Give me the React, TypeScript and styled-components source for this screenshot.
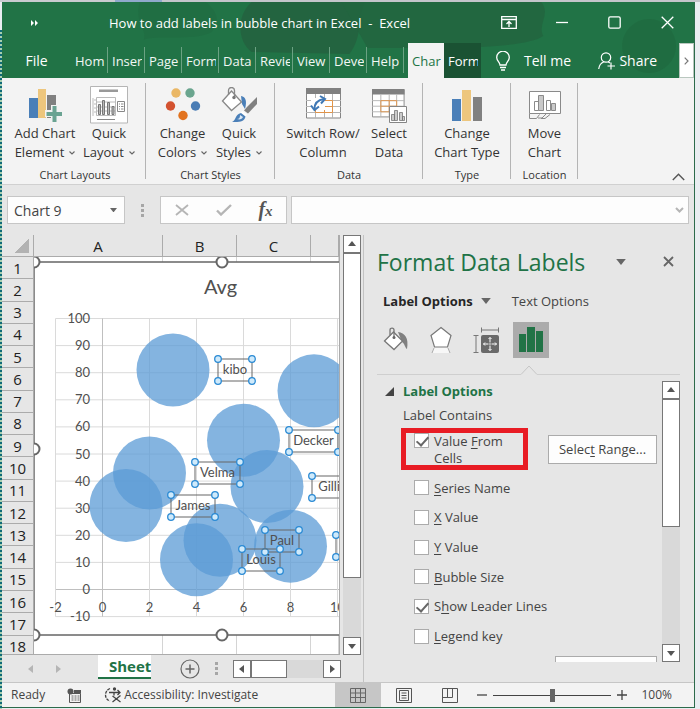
import React from "react";
import styled, { createGlobalStyle, css } from "styled-components";

const GlobalStyle = createGlobalStyle`
  * { box-sizing: border-box; }
  html, body { margin: 0; padding: 0; }
  body { font-family: "Open Sans", "Noto Sans", sans-serif; font-size: 13px; color: #444; overflow: hidden; }
  button, input { font: inherit; color: inherit; margin: 0; padding: 0; border: 0; background: none; border-radius: 0; }
  svg { display: block; flex: none; }
`;

const Desktop = styled.div`
  height: 100vh;
  min-height: 600px;
  display: flex;
  padding: 2px 5px 1px 2px;
  background:
    repeating-linear-gradient(180deg, #0f6a78 0 2px, #a9cfb0 2px 4px) left 0 top 30px / 2px 100% no-repeat,
    linear-gradient(90deg, #c9cbd0 0 115px, #8fa9cc 115px 162px, #c4c5cb 162px 100%) left top / 100% 2px no-repeat,
    #e9edf1;
`;

const Window = styled.main`
  flex: 1;
  min-width: 0;
  display: flex;
  flex-direction: column;
  background: #e6e6e6;
  border-right: 1px solid #2c6b4b;
  border-bottom: 1px solid #2c6b4b;
`;

/* ---------- header ---------- */

const Header = styled.header`
  position: relative;
  flex: none;
  background: #217346;
  color: #fff;
`;

const HeaderArt = styled.svg`
  position: absolute;
  inset: 0;
  width: 100%;
  height: 100%;
`;

const TitleBar = styled.div`
  position: relative;
  display: flex;
  align-items: center;
  height: 41px;
  padding-left: 28px;
`;

const DocTitle = styled.h1`
  flex: 1;
  margin: 0 0 0 69px;
  font-size: 13px;
  font-weight: 400;
  line-height: 20px;
  white-space: pre;
`;

const WindowButtons = styled.div`
  display: flex;
`;

const WindowButton = styled.button`
  width: 53px;
  height: 38px;
  display: grid;
  place-items: center;
`;

const TabBar = styled.nav`
  position: relative;
  display: flex;
  align-items: stretch;
  height: 35px;
  font-size: 14px;
`;

const FileTab = styled.button`
  width: 69px;
`;

const tabKinds = {
  plain: css`
    color: #f2f7f4;
    &::after { content: ""; position: absolute; right: 0; top: 4px; bottom: 5px; width: 1px; background: #6ba283; }
  `,
  active: css`background: #f3f3f3; color: #217346; margin-left: 4px; width: 36px;`,
  dark: css`background: #1a5233; color: #fff;`,
};

const Tab = styled.button<{ $kind: keyof typeof tabKinds }>`
  position: relative;
  width: 37px;
  padding: 0 3px 0 4px;
  font-size: 13px;
  ${(p) => tabKinds[p.$kind]}
  > span { display: block; overflow: hidden; white-space: nowrap; text-align: left; }
`;

const TabAction = styled.button<{ $push?: boolean }>`
  display: flex;
  align-items: center;
  gap: ${(p) => (p.$push ? 3 : 14)}px;
  margin-left: ${(p) => (p.$push ? "auto" : "15px")};
  margin-right: ${(p) => (p.$push ? 22 : 0)}px;
`;

const TabScroll = styled.button`
  width: 15px;
  display: grid;
  place-items: center;
  background: #fff;
  border: 1px solid #b9c7bf;
`;

/* ---------- ribbon ---------- */

const Ribbon = styled.section`
  flex: none;
  display: flex;
  align-items: stretch;
  height: 107px;
  padding-left: 2px;
  background: #f3f3f3;
  border-bottom: 1px solid #d0d0d0;
`;

const Group = styled.div<{ $width: number }>`
  position: relative;
  flex: none;
  width: ${(p) => p.$width}px;
  padding-top: 8px;
  display: flex;
  flex-direction: column;
  &::after { content: ""; position: absolute; right: 0; top: 5px; bottom: 5px; width: 1px; background: #b4b4b4; }
`;

const GroupTools = styled.div`
  display: flex;
  justify-content: center;
  height: 80px;
`;

const Tool = styled.button<{ $width: number }>`
  flex: none;
  width: ${(p) => p.$width}px;
  display: flex;
  flex-direction: column;
  align-items: center;
  justify-content: flex-start;
  font-size: 13px;
  line-height: 19px;
  color: #333;
  white-space: nowrap;
`;

const ToolIcon = styled.span`
  display: grid;
  place-items: center;
  height: 38px;
`;

const ToolLine = styled.span`
  display: flex;
  align-items: center;
  justify-content: center;
  gap: 5px;
`;

const GroupLabel = styled.div`
  text-align: center;
  font-size: 11px;
  line-height: 18px;
  color: #333;
`;

const Collapse = styled.button`
  align-self: flex-end;
  margin: 0 9px 3px auto;
`;

/* ---------- formula bar ---------- */

const FormulaBar = styled.section`
  flex: none;
  display: flex;
  align-items: center;
  height: 50px;
  padding: 0 5px;
`;

const Field = styled.div<{ $width?: number }>`
  display: flex;
  align-items: center;
  height: 28px;
  ${(p) => (p.$width ? `flex: none; width: ${p.$width}px;` : "flex: 1; margin-left: 4px;")}
  background: #fdfdfd;
  border: 1px solid #c6c6c6;
`;

const FieldInput = styled.input`
  flex: 1;
  min-width: 0;
  height: 100%;
  padding: 0 6px;
  outline: none;
  font-size: 14px;
`;

const FieldButton = styled.button<{ $width: number }>`
  width: ${(p) => p.$width}px;
  height: 100%;
  display: grid;
  place-items: center;
`;

const FxMark = styled.span`
  font-family: "Liberation Serif", serif;
  font-style: italic;
  font-weight: 700;
  font-size: 20px;
  line-height: 20px;
  color: #555;
  small { font-size: 15px; }
`;

const Grip = styled.span<{ $gap: number }>`
  flex: none;
  width: 3px;
  height: 13px;
  margin: 0 ${(p) => p.$gap}px;
  background: repeating-linear-gradient(180deg, #a6a6a6 0 3px, transparent 3px 5px);
`;

/* ---------- body ---------- */

const Body = styled.div`
  flex: 1;
  min-height: 0;
  display: flex;
`;

const SheetArea = styled.section`
  flex: 1;
  min-width: 0;
  display: flex;
  flex-direction: column;
`;

const SheetRow = styled.div`
  flex: 1;
  min-height: 0;
  display: flex;
  gap: 3px;
  padding-right: 2px;
`;

const SheetView = styled.div`
  position: relative;
  flex: 1;
  min-width: 0;
  overflow: hidden;
  border-bottom: 1px solid #ababab;
  border-right: 1px solid #ababab;
`;

const Grid = styled.table`
  width: 100%;
  height: 423px;
  table-layout: fixed;
  border-collapse: separate;
  border-spacing: 0;
  background: #fff;
  color: #222;
  font-size: 15px;
  line-height: 20px;
  th, td { padding: 0; font-weight: 400; text-align: center; border-right: 1px solid #d4d4d4; }
  th { background: #e6e6e6; border-bottom: 1px solid #ababab; border-right-color: #ababab; }
  thead th { height: 22px; }
`;

const Col = styled.col<{ $width: number }>`
  width: ${(p) => p.$width}px;
`;

const CornerMark = styled.span`
  display: block;
  width: 15px;
  height: 15px;
  margin: 0 0 0 12px;
  background: linear-gradient(135deg, transparent 50%, #b2b2b2 50%);
`;

const ChartLayer = styled.figure`
  position: absolute;
  left: 32px;
  top: 22px;
  margin: 0;
  font-family: Lato, "Open Sans", sans-serif;
`;

const ScrollTrack = styled.div`
  flex: none;
  width: 18px;
  display: flex;
  flex-direction: column;
  background: #d9d9d9;
`;

const ScrollButton = styled.button`
  flex: none;
  width: 18px;
  height: 18px;
  display: grid;
  place-items: center;
  background: #fff;
  border: 1px solid #777;
`;

const ScrollThumb = styled.div<{ $share: number }>`
  flex: ${(p) => p.$share} 0 0;
  background: #fff;
  border: 1px solid #777;
`;

const ScrollSpace = styled.div<{ $share: number }>`
  flex: ${(p) => p.$share} 0 0;
`;

const SheetTabs = styled.div`
  flex: none;
  display: flex;
  align-items: center;
  height: 27px;
  padding-right: 22px;
`;

const SheetNav = styled.div`
  display: flex;
  flex: none;
  width: 96px;
  padding-left: 24px;
  gap: 17px;
`;

const SheetTab = styled.button`
  flex: none;
  align-self: flex-start;
  width: 53px;
  height: 24px;
  padding-left: 11px;
  overflow: hidden;
  text-align: left;
  white-space: nowrap;
  background: #fff;
  border-bottom: 2px solid #217346;
  color: #217346;
  font-size: 15px;
  font-weight: 700;
  line-height: 20px;
`;

const AddSheet = styled.button`
  flex: none;
  margin: 0 0 0 29px;
`;

const HScroll = styled.div`
  flex: 1;
  display: flex;
  height: 18px;
  background: #d9d9d9;
`;

/* ---------- format pane ---------- */

const Pane = styled.aside`
  flex: none;
  width: 331px;
  display: flex;
  flex-direction: column;
  padding-left: 13px;
  border-left: 1px solid #c3c3c3;
`;

const PaneHead = styled.div`
  display: flex;
  align-items: center;
  height: 53px;
  padding-right: 14px;
`;

const PaneTitle = styled.h2`
  flex: 1;
  margin: 0;
  color: #217346;
  font-size: 23px;
  font-weight: 400;
  line-height: 32px;
  white-space: nowrap;
`;

const PaneHeadButton = styled.button`
  width: 24px;
  height: 24px;
  margin-left: 24px;
  display: grid;
  place-items: center;
`;

const PaneTabs = styled.div`
  display: flex;
  align-items: center;
  height: 26px;
  padding-left: 6px;
  gap: 21px;
`;

const PaneTab = styled.button<{ $active?: boolean }>`
  display: flex;
  align-items: center;
  gap: 8px;
  font-size: 13px;
  line-height: 20px;
  font-weight: ${(p) => (p.$active ? 700 : 400)};
  color: ${(p) => (p.$active ? "#262626" : "#444")};
`;

const PaneIcons = styled.div`
  display: flex;
  gap: 9px;
  padding: 8px 0 0 1px;
`;

const PaneIcon = styled.button<{ $active?: boolean }>`
  width: 36px;
  height: 36px;
  display: grid;
  place-items: center;
  background: ${(p) => (p.$active ? "#ababab" : "transparent")};
`;

const Notch = styled.div`
  display: flex;
  align-items: flex-end;
  height: 17px;
  margin-right: 14px;
  &::before, &::after { content: ""; height: 1px; background: #cfcfcf; }
  &::before { width: 144px; }
  &::after { flex: 1; }
`;

const PaneBody = styled.div`
  flex: 1;
  min-height: 0;
  display: flex;
  gap: 5px;
  padding: 6px 14px 20px 0;
`;

const Options = styled.div`
  flex: 1;
  min-width: 0;
  overflow: hidden;
  padding-left: 8px;
  font-size: 13px;
  line-height: 19px;
`;

const SectionTitle = styled.button`
  display: flex;
  align-items: center;
  gap: 9px;
  height: 20px;
  color: #217346;
  font-weight: 700;
`;

const FieldSet = styled.fieldset`
  margin: 0;
  padding: 0;
  border: 0;
  > legend { padding: 0 0 0 18px; height: 27px; line-height: 29px; }
`;

const FromCells = styled.div`
  display: flex;
  align-items: center;
  justify-content: space-between;
  padding-left: 16px;
`;

const Highlight = styled.div`
  width: 127px;
  height: 42px;
  border: 5px solid #e81c24;
  padding: 0 0 0 8px;
  overflow: hidden;
`;

const CheckRow = styled.label<{ $top?: boolean }>`
  display: flex;
  align-items: ${(p) => (p.$top ? "flex-start" : "center")};
  gap: 5px;
  line-height: ${(p) => (p.$top ? 17 : 20)}px;
  u { text-underline-offset: 2px; }
`;

const Check = styled.input`
  appearance: none;
  position: relative;
  flex: none;
  width: 15px;
  height: 15px;
  background: #fff;
  border: 1px solid #ababab;
  &:checked::after {
    content: "";
    position: absolute;
    left: 4px;
    top: 0;
    width: 5px;
    height: 10px;
    border: solid #666;
    border-width: 0 2px 2px 0;
    transform: rotate(42deg);
  }
`;

const CheckList = styled.div`
  display: grid;
  grid-auto-rows: 1fr;
  height: 178px;
  margin-top: 3px;
  padding-left: 29px;
`;

const PushButton = styled.button<{ $width: number }>`
  width: ${(p) => p.$width}px;
  height: 29px;
  background: #fdfdfd;
  border: 1px solid #ababab;
  white-space: nowrap;
  u { text-underline-offset: 2px; }
`;

const NextButton = styled.div`
  display: flex;
  justify-content: flex-end;
  padding-top: 5px;
`;

/* ---------- status bar ---------- */

const StatusBar = styled.footer`
  flex: none;
  display: flex;
  align-items: center;
  height: 25px;
  padding: 0 22px 0 9px;
  background: #f3f3f3;
  border-top: 1px solid #c6c6c6;
  font-size: 12px;
  line-height: 18px;
`;

const StatusItem = styled.span`
  display: flex;
  align-items: center;
  gap: 2px;
  margin-right: 22px;
  white-space: nowrap;
`;

const ViewButton = styled.button<{ $active?: boolean }>`
  width: 46px;
  height: 100%;
  display: grid;
  place-items: center;
  background: ${(p) => (p.$active ? "#c6c6c6" : "transparent")};
`;

const Views = styled.div`
  display: flex;
  align-self: stretch;
  margin: 0 3px 0 auto;
`;

const ZoomButton = styled.button`
  width: 12px;
  height: 20px;
  display: grid;
  place-items: center;
`;

const ZoomSlider = styled.input`
  appearance: none;
  width: 118px;
  height: 14px;
  margin: 0 5px;
  background: linear-gradient(#444, #444) center / 100% 1px no-repeat;
  &::-webkit-slider-thumb { appearance: none; width: 5px; height: 13px; background: #666; }
`;

const ZoomValue = styled.span`
  margin-left: 13px;
`;

/* ---------- icons ---------- */

const Caret = ({ color = "#666", w = 8 }: { color?: string; w?: number }) => (
  <svg width={w} height={w / 2 + 1} viewBox="0 0 8 5" aria-hidden><path d="M0 0h8L4 5z" fill={color} /></svg>
);

const Arrow = ({ dir, color = "#555" }: { dir: "up" | "down" | "left" | "right"; color?: string }) => {
  const d = { up: "M1 7 5 2 9 7z", down: "M1 3h8L5 8z", left: "M7 1v8L2 5z", right: "M3 1v8l5-4z" }[dir];
  return <svg width="10" height="10" viewBox="0 0 10 10" aria-hidden><path d={d} fill={color} /></svg>;
};

const SmallChevron = () => (
  <svg width="6" height="4" viewBox="0 0 6 4" aria-hidden><path d="M.5.5 3 3 5.500.5" fill="none" stroke="#666" strokeWidth="1.100" /></svg>
);

const AddElementIcon = () => (
  <svg width="34" height="36" viewBox="0 0 34 36">
    <path d="M1 11h9v20H1z" fill="#4a7fb8" />
    <path d="M10 2h8v29h-8z" fill="#edc67d" />
    <path d="M19 8h9v23h-9z" fill="#808080" />
    <path d="M23 18h7v5h5v7h-5v6h-7v-6h-6v-7h6z" fill="#f3f3f3" />
    <path d="M24.500 19h4v6h6v4h-6v6h-4v-6h-6v-4h6z" fill="#6aa392" />
  </svg>
);

const QuickLayoutIcon = () => (
  <svg width="38" height="38" viewBox="0 0 38 38" fill="none">
    <path d="M.5.5h37v36.500H.5z" fill="#fff" stroke="#b5b5b5" />
    <path d="M9 3.500h19v2.500H9z" fill="#999" />
    <path d="M6.500 11.500h19v18h-19zM6.500 16h19M6.500 21h19M6.500 25h19M3 12v18M4 14h2M4 18h2M4 22h2M4 26h2" stroke="#bbb" />
    <path d="M8.500 18.500h2v10h-2zM12.500 14.500h2v14h-2zM17.500 16.500h2v12h-2zM22 20.500h2v8h-2z" fill="#b9b9b9" stroke="#777" />
    <path d="M27.500 15.500h7v10h-7zM29 18h1m1 0h2.500M29 20.500h1m1 0h2.500M29 23h1m1 0h2.500M7 33.500h18" stroke="#888" />
  </svg>
);

const ColorsIcon = () => (
  <svg width="36" height="34" viewBox="0 0 36 34">
    <circle cx="11" cy="5" r="4.700" fill="#eab765" />
    <circle cx="25" cy="5" r="4.700" fill="#6aa58e" />
    <circle cx="5.500" cy="18" r="4.700" fill="#d35230" />
    <circle cx="30.500" cy="18" r="4.700" fill="#4a7db5" />
    <circle cx="18" cy="27.500" r="4.700" fill="#e2731f" />
  </svg>
);

const QuickStylesIcon = () => (
  <svg width="36" height="36" viewBox="0 0 36 36" fill="none">
    <path d="M20 9c5 1 6 5 4 13l-3-5z" fill="#4a7fb8" />
    <path d="m1.500 14 9-10 10 11-10 8.500z" fill="#fff" stroke="#888" strokeWidth="1.300" />
    <path d="M7.500 8V3.500c0-4 6-4 6 0V10" stroke="#888" strokeWidth="1.300" />
    <circle cx="13" cy="10.500" r="1.700" fill="#777" />
    <path d="m36 10-10 10-3 3.500 4 3L36 17z" fill="#808080" />
    <path d="m21.500 24 4.500 3.500-1.500 2-5-4z" fill="#fff" />
    <path d="M11 35c4-1 3-8 9-9l4.500 3.500c-1 5-6 6-13.500 5.500z" fill="#4a7fb8" />
    <path d="M16 32c2 0 3-1 3-4l3 2c-1 2-3 3-6 2z" fill="#dbe8f4" />
  </svg>
);

const TableBase = () => (
  <>
    <path d="M.5 1h34v29H.5z" fill="#fff" stroke="#858585" />
    <path d="M0 0h35v6H0z" fill="#808080" />
    <path d="M0 12.500h35M0 18.500h35M0 24.500h35M9.500 6v24M18.500 6v24M26.500 6v24" stroke="#b5b5b5" />
    <path d="M9.500 12.500h17v12h-17zM9.500 18.500h17M18.500 12.500v12" stroke="#e0944a" fill="none" />
  </>
);

const SwitchIcon = () => (
  <svg width="35" height="34" viewBox="0 0 35 34">
    <TableBase />
    <path d="M5 10h14v12H5z" fill="#fff" />
    <path d="M8.500 21c0-6 3-9 9.500-10" fill="none" stroke="#3f78b5" strokeWidth="2" />
    <path d="m14 8 5 3-4 4.500M5 17.500l3.500 4.500 4.500-3.500" fill="none" stroke="#3f78b5" strokeWidth="2" />
  </svg>
);

const SelectDataIcon = () => (
  <svg width="35" height="35" viewBox="0 0 35 35">
    <g transform="translate(0 1) scale(.93)"><TableBase /></g>
    <path d="M17.500 18.500h17v16h-17z" fill="#fff" stroke="#858585" />
    <path d="M19.500 26.500h3v6h-3zM22.500 22.500h3v10h-3zM27.500 24.500h3v8h-3zM30.500 28.500h2v4h-2z" fill="#ccc" stroke="#777" strokeWidth=".8" />
  </svg>
);

const ChartTypeIcon = () => (
  <svg width="30" height="32" viewBox="0 0 30 32">
    <path d="M0 10h9v22H0z" fill="#4a7fb8" />
    <path d="M10 1h9v31h-9z" fill="#edc67d" />
    <path d="M21 8h9v24h-9z" fill="#808080" />
  </svg>
);

const MoveChartIcon = () => (
  <svg width="32" height="32" viewBox="0 0 32 32" fill="none">
    <path d="M.5 2.500h31v22h-31z" fill="#fff" stroke="#8a8a8a" />
    <path d="M5.500 12.500h4v9h-4zM17.500 11.500h4v10h-4z" fill="#fff" stroke="#8a8a8a" />
    <path d="M9.500 6.500h5v15h-5zM22.500 14.500h4v7h-4z" fill="#c9c9c9" stroke="#8a8a8a" />
    <path d="M.5 24.500v5h7l3-4M12 29.500h4l5-4M9 29h4l4-4" stroke="#8a8a8a" />
  </svg>
);

const BucketIcon = () => (
  <svg width="26" height="26" viewBox="0 0 26 26" fill="none">
    <path d="M15 5c7 1 11 6 9 17-2-1-2-5-5-7z" fill="#808080" />
    <path d="m1.500 14 9-9 9 9-8.500 8.500z" fill="#fff" stroke="#777" strokeWidth="1.300" />
    <path d="M7 8.500V3c0-2.500 4-2.500 4 0v7" stroke="#777" strokeWidth="1.300" />
    <circle cx="11" cy="10.500" r="1.500" fill="#666" />
  </svg>
);

const PentagonIcon = () => (
  <svg width="26" height="28" viewBox="0 0 26 28" fill="none">
    <path d="m6 21-2 6h18l-2-6z" fill="#f7f7f7" />
    <path d="M6 22 4 27M20 22l2 5" stroke="#aaa" />
    <path d="m13 1.500 10 8L19.500 21h-13L3 9.500z" fill="#fff" stroke="#777" strokeWidth="1.200" />
  </svg>
);

const SizeIcon = () => (
  <svg width="26" height="26" viewBox="0 0 26 26" fill="none">
    <rect x="8" y="8" width="18" height="18" rx="2" fill="#6a6a6a" />
    <path d="M8.500 3h17M8.500.5v5M25.500.5v5M3 8.500v17M.5 8.500h5M.5 25.500h5" stroke="#777" />
    <path d="M17 10.500v13M10.500 17h13" stroke="#fff" strokeDasharray="5 1 1 1" />
    <path d="m15.500 12 1.500-1.500 1.500 1.500M15.500 22l1.500 1.500 1.500-1.500M12 15.500 10.500 17l1.500 1.500M22 15.500l1.500 1.500-1.500 1.500" stroke="#fff" />
  </svg>
);

const BarsIcon = () => (
  <svg width="26" height="26" viewBox="0 0 26 26" fill="#217346">
    <path d="M1 7h7v18H1zM9 0h8v25H9zM18 4h7v21h-7z" />
  </svg>
);

/* ---------- chart ---------- */

const BUBBLES = [
  [3, 81], [9, 73.3], [6, 55.1], [2, 43], [1, 31], [7, 38], [5, 18.2], [4, 11], [8, 16],
];
const LABELS: { text: string; x: number; y: number; w: number }[] = [
  { text: "kibo", x: 218, y: 359, w: 34 },
  { text: "Decker", x: 289, y: 430, w: 49 },
  { text: "Velma", x: 195, y: 462, w: 45 },
  { text: "Gillian", x: 312, y: 476, w: 48 },
  { text: "James", x: 171, y: 495, w: 44 },
  { text: "Paul", x: 265, y: 530, w: 34 },
  { text: "Louis", x: 242, y: 549, w: 38 },
  { text: "", x: 336, y: 535, w: 40 },
];
const px = (v: number) => 102.5 + v * 23.5;
const py = (v: number) => 589.5 - v * 2.71;
const Y_TICKS = [100, 90, 80, 70, 60, 50, 40, 30, 20, 10, 0, -10];
const X_TICKS = [-2, 0, 2, 4, 6, 8, 10];

const ChartText = styled.text<{ $size: number }>`
  font-size: ${(p) => p.$size}px;
  fill: #505050;
`;

const BubbleChart = () => (
  <svg width="400" height="400" viewBox="34 257 400 400" role="img" aria-label="Avg bubble chart">
    <rect x="34" y="262" width="376" height="373" fill="#fff" stroke="#666" strokeWidth="1.500" />
    <ChartText $size={20} x="220.500" y="294" textAnchor="middle">Avg</ChartText>
    <g strokeWidth="1">
      {Y_TICKS.map((v) => (
        <line key={v} x1={px(-2)} x2={400} y1={py(v)} y2={py(v)} stroke={v === 0 ? "#bfbfbf" : "#dadada"} />
      ))}
      {X_TICKS.map((v) => (
        <line key={v} x1={px(v)} x2={px(v)} y1={py(100)} y2={py(-10)} stroke={v === 0 ? "#bfbfbf" : "#dadada"} />
      ))}
    </g>
    {BUBBLES.map(([x, y]) => (
      <circle key={x} cx={px(x)} cy={py(y)} r="36.500" fill="#5b9bd5" fillOpacity=".75" />
    ))}
    {Y_TICKS.map((v) => (
      <ChartText key={v} $size={13} x="90" y={py(v) + 4.5} textAnchor="end">{v}</ChartText>
    ))}
    {X_TICKS.map((v) => (
      <ChartText key={v} $size={13} x={px(v)} y="612" textAnchor="middle">{v}</ChartText>
    ))}
    {LABELS.map((l) => (
      <g key={l.x}>
        <rect x={l.x} y={l.y} width={l.w} height="22" fill="none" stroke="#666" />
        {l.text && <ChartText $size={13} x={l.x + l.w / 2} y={l.y + 15} textAnchor="middle">{l.text}</ChartText>}
        {[[0, 0], [1, 0], [0, 1], [1, 1]].map(([a, b]) => (
          <circle key={`${a}${b}`} cx={l.x + a * l.w} cy={l.y + b * 22} r="3.300" fill="#cfeafb" stroke="#2a8ad4" strokeWidth="1.300" />
        ))}
      </g>
    ))}
    {[[34, 262], [222, 262], [34, 449], [34, 635], [222, 635]].map(([x, y]) => (
      <circle key={`${x}-${y}`} cx={x} cy={y} r="5.500" fill="#fff" stroke="#666" strokeWidth="2" />
    ))}
  </svg>
);

const TABS: [string, string][] = [
  ["Hom", "Home"], ["Inser", "Insert"], ["Page", "Page Layout"], ["Form", "Formulas"], ["Data", "Data"],
  ["Revie", "Review"], ["View", "View"], ["Deve", "Developer"], ["Help", "Help"],
];

const App = () => (
  <>
    <GlobalStyle />
    <Desktop>
      <Window>
        <Header>
          <HeaderArt viewBox="0 0 693 76" preserveAspectRatio="none" aria-hidden>
            <path d="M138 0c-6 20 8 28 4 38 10-6 50 2 68-8 10-12 4-22-6-30z" fill="#1f6b41" opacity=".6" />
            <path d="M250 0c-16 14-14 40 0 50l98 2c14-18 8-40 16-52z" fill="#24633f" opacity=".9" />
            <path d="M340 0h200c10 12-4 22 2 34-20 14-110 12-176 12z" fill="#226540" opacity=".85" />
            <circle cx="648" cy="44" r="27" fill="#1d6239" opacity=".4" />
          </HeaderArt>
          <TitleBar>
            <svg width="10" height="6" viewBox="0 0 10 6" aria-hidden><path d="M1 0v6l3-3zM5 0v6l3-3z" fill="#fff" /></svg>
            <DocTitle>{"How to add labels in bubble chart in Excel  -  Excel"}</DocTitle>
            <WindowButtons>
              <WindowButton aria-label="Ribbon display options">
                <svg width="16" height="13" viewBox="0 0 16 13" fill="none" stroke="#fff" strokeWidth="1.300"><path d="M.7.7h14.600v11.600H.7zM.7 3.500h14.600M8 11V5.500M5.500 8 8 5.500 10.500 8" /></svg>
              </WindowButton>
              <WindowButton aria-label="Minimize">
                <svg width="12" height="12" viewBox="0 0 12 12"><path d="M0 5.500h12" stroke="#fff" strokeWidth="1.300" /></svg>
              </WindowButton>
              <WindowButton aria-label="Maximize">
                <svg width="13" height="13" viewBox="0 0 13 13"><rect x=".8" y=".8" width="11.400" height="11.400" rx="1.500" fill="none" stroke="#fff" strokeWidth="1.300" /></svg>
              </WindowButton>
              <WindowButton aria-label="Close">
                <svg width="13" height="13" viewBox="0 0 13 13"><path d="m.7.7 11.600 11.600M12.300.7.7 12.300" stroke="#fff" strokeWidth="1.300" /></svg>
              </WindowButton>
            </WindowButtons>
          </TitleBar>
          <TabBar>
            <FileTab>File</FileTab>
            {TABS.map(([short, full]) => (
              <Tab key={full} $kind="plain" aria-label={full}><span>{short}</span></Tab>
            ))}
            <Tab $kind="active" aria-label="Chart Design"><span>Char</span></Tab>
            <Tab $kind="dark" aria-label="Format"><span>Form</span></Tab>
            <TabAction>
              <svg width="14" height="20" viewBox="0 0 14 20" fill="none" stroke="#fff" strokeWidth="1.300"><path d="M4 14c0-3-3.300-4-3.300-7.500a6.300 6.300 0 0 1 12.600 0C13.300 10 10 11 10 14zM4 16.500h6M5 19h4" /></svg>
              Tell me
            </TabAction>
            <TabAction $push>
              <svg width="18" height="18" viewBox="0 0 18 18" fill="none" stroke="#fff" strokeWidth="1.200"><circle cx="8" cy="5.500" r="4.700" /><path d="M.7 17c.5-4 2.300-6 5-7M10 9.700l2 1.300M13 10.500v7M9.500 14h7.500" /></svg>
              Share
            </TabAction>
            <TabScroll aria-label="Scroll tabs">
              <svg width="5" height="8" viewBox="0 0 5 8"><path d="m.7.7 3.300 3.300L.7 7.300" fill="none" stroke="#777" strokeWidth="1.200" /></svg>
            </TabScroll>
          </TabBar>
        </Header>

        <Ribbon>
          <Group $width={142}>
            <GroupTools>
              <Tool $width={68}><ToolIcon><AddElementIcon /></ToolIcon><ToolLine>Add Chart</ToolLine><ToolLine>Element <SmallChevron /></ToolLine></Tool>
              <Tool $width={60}><ToolIcon><QuickLayoutIcon /></ToolIcon><ToolLine>Quick</ToolLine><ToolLine>Layout <SmallChevron /></ToolLine></Tool>
            </GroupTools>
            <GroupLabel>Chart Layouts</GroupLabel>
          </Group>
          <Group $width={129}>
            <GroupTools>
              <Tool $width={57}><ToolIcon><ColorsIcon /></ToolIcon><ToolLine>Change</ToolLine><ToolLine>Colors <SmallChevron /></ToolLine></Tool>
              <Tool $width={56}><ToolIcon><QuickStylesIcon /></ToolIcon><ToolLine>Quick</ToolLine><ToolLine>Styles <SmallChevron /></ToolLine></Tool>
            </GroupTools>
            <GroupLabel>Chart Styles</GroupLabel>
          </Group>
          <Group $width={148}>
            <GroupTools>
              <Tool $width={80}><ToolIcon><SwitchIcon /></ToolIcon><ToolLine>Switch Row/</ToolLine><ToolLine>Column</ToolLine></Tool>
              <Tool $width={52}><ToolIcon><SelectDataIcon /></ToolIcon><ToolLine>Select</ToolLine><ToolLine>Data</ToolLine></Tool>
            </GroupTools>
            <GroupLabel>Data</GroupLabel>
          </Group>
          <Group $width={88}>
            <GroupTools>
              <Tool $width={80}><ToolIcon><ChartTypeIcon /></ToolIcon><ToolLine>Change</ToolLine><ToolLine>Chart Type</ToolLine></Tool>
            </GroupTools>
            <GroupLabel>Type</GroupLabel>
          </Group>
          <Group $width={67}>
            <GroupTools>
              <Tool $width={56}><ToolIcon><MoveChartIcon /></ToolIcon><ToolLine>Move</ToolLine><ToolLine>Chart</ToolLine></Tool>
            </GroupTools>
            <GroupLabel>Location</GroupLabel>
          </Group>
          <Collapse aria-label="Collapse the ribbon">
            <svg width="13" height="8" viewBox="0 0 13 8"><path d="m.8 7 5.700-5.700L12.200 7" fill="none" stroke="#555" strokeWidth="1.400" /></svg>
          </Collapse>
        </Ribbon>

        <FormulaBar>
          <Field $width={118}>
            <FieldInput aria-label="Name box" defaultValue="Chart 9" />
            <FieldButton $width={22} aria-label="Show names"><Caret w={7} /></FieldButton>
          </Field>
          <Grip $gap={16} />
          <Field $width={127}>
            <FieldButton $width={41} aria-label="Cancel">
              <svg width="14" height="12" viewBox="0 0 14 12"><path d="m1 1 12 10M13 1 1 11" stroke="#b5b5b5" strokeWidth="1.800" /></svg>
            </FieldButton>
            <FieldButton $width={43} aria-label="Enter">
              <svg width="16" height="12" viewBox="0 0 16 12"><path d="m1 6.500 4 4L15 1" fill="none" stroke="#b5b5b5" strokeWidth="2.400" /></svg>
            </FieldButton>
            <FieldButton $width={41} aria-label="Insert function"><FxMark>f<small>x</small></FxMark></FieldButton>
          </Field>
          <Field>
            <FieldInput aria-label="Formula" />
            <FieldButton $width={18} aria-label="Expand formula bar">
              <svg width="9" height="6" viewBox="0 0 9 6"><path d="m1 1 3.500 3.500L8 1" fill="none" stroke="#b5b5b5" strokeWidth="2" /></svg>
            </FieldButton>
          </Field>
        </FormulaBar>

        <Body>
          <SheetArea>
            <SheetRow>
              <SheetView>
                <Grid>
                  <colgroup><Col $width={32} /><Col $width={129} /><Col $width={74} /><Col $width={74} /><col /></colgroup>
                  <thead>
                    <tr><th aria-label="Select all"><CornerMark /></th><th>A</th><th>B</th><th>C</th><th aria-label="D" /></tr>
                  </thead>
                  <tbody>
                    {Array.from({ length: 18 }, (_, i) => (
                      <tr key={i}><th>{i + 1}</th><td /><td /><td /><td /></tr>
                    ))}
                  </tbody>
                </Grid>
                <ChartLayer><BubbleChart /></ChartLayer>
              </SheetView>
              <ScrollTrack>
                <ScrollButton aria-label="Scroll up"><Arrow dir="up" /></ScrollButton>
                <ScrollThumb $share={325} />
                <ScrollSpace $share={59} />
                <ScrollButton aria-label="Scroll down"><Arrow dir="down" /></ScrollButton>
              </ScrollTrack>
            </SheetRow>
            <SheetTabs>
              <SheetNav><Arrow dir="left" color="#b5b5b5" /><Arrow dir="right" color="#b5b5b5" /></SheetNav>
              <SheetTab aria-label="Sheet1">Sheet</SheetTab>
              <AddSheet aria-label="New sheet">
                <svg width="20" height="20" viewBox="0 0 20 20" fill="none" stroke="#666"><circle cx="10" cy="10" r="9" strokeWidth="1.200" /><path d="M10 5.500v9M5.500 10h9" strokeWidth="1.500" /></svg>
              </AddSheet>
              <Grip $gap={15} />
              <HScroll>
                <ScrollButton aria-label="Scroll left"><Arrow dir="left" /></ScrollButton>
                <ScrollThumb $share={35} />
                <ScrollSpace $share={37} />
                <ScrollButton aria-label="Scroll right"><Arrow dir="right" /></ScrollButton>
              </HScroll>
            </SheetTabs>
          </SheetArea>

          <Pane>
            <PaneHead>
              <PaneTitle>Format Data Labels</PaneTitle>
              <PaneHeadButton aria-label="Pane options"><Caret w={10} /></PaneHeadButton>
              <PaneHeadButton aria-label="Close pane">
                <svg width="11" height="11" viewBox="0 0 11 11"><path d="m1 1 9 9M10 1l-9 9" stroke="#666" strokeWidth="1.800" /></svg>
              </PaneHeadButton>
            </PaneHead>
            <PaneTabs>
              <PaneTab $active>Label Options <Caret w={10} /></PaneTab>
              <PaneTab>Text Options</PaneTab>
            </PaneTabs>
            <PaneIcons>
              <PaneIcon aria-label="Fill and line"><BucketIcon /></PaneIcon>
              <PaneIcon aria-label="Effects"><PentagonIcon /></PaneIcon>
              <PaneIcon aria-label="Size and properties"><SizeIcon /></PaneIcon>
              <PaneIcon $active aria-label="Label options"><BarsIcon /></PaneIcon>
            </PaneIcons>
            <Notch><svg width="16" height="10" viewBox="0 0 16 10"><path d="M0 9.500 8 1l8 8.500" fill="none" stroke="#c6c6c6" /></svg></Notch>
            <PaneBody>
              <Options>
                <SectionTitle>
                  <svg width="9" height="9" viewBox="0 0 9 9"><path d="M9 0v9H0z" fill="#444" /></svg>
                  Label Options
                </SectionTitle>
                <FieldSet>
                  <legend>Label Contains</legend>
                  <FromCells>
                    <Highlight>
                      <CheckRow $top><Check type="checkbox" defaultChecked /><span>Value <u>F</u>rom<br />Cells</span></CheckRow>
                    </Highlight>
                    <PushButton $width={109}>Selec<u>t</u> Range...</PushButton>
                  </FromCells>
                  <CheckList>
                    <CheckRow><Check type="checkbox" /><span><u>S</u>eries Name</span></CheckRow>
                    <CheckRow><Check type="checkbox" /><span><u>X</u> Value</span></CheckRow>
                    <CheckRow><Check type="checkbox" /><span><u>Y</u> Value</span></CheckRow>
                    <CheckRow><Check type="checkbox" /><span><u>B</u>ubble Size</span></CheckRow>
                    <CheckRow><Check type="checkbox" defaultChecked /><span>S<u>h</u>ow Leader Lines</span></CheckRow>
                    <CheckRow><Check type="checkbox" /><span><u>L</u>egend key</span></CheckRow>
                  </CheckList>
                  <NextButton><PushButton $width={102} aria-label="Separator" /></NextButton>
                </FieldSet>
              </Options>
              <ScrollTrack>
                <ScrollButton aria-label="Scroll up"><Arrow dir="up" /></ScrollButton>
                <ScrollThumb $share={127} />
                <ScrollSpace $share={117} />
                <ScrollButton aria-label="Scroll down"><Arrow dir="down" /></ScrollButton>
              </ScrollTrack>
            </PaneBody>
          </Pane>
        </Body>

        <StatusBar>
          <StatusItem>Ready</StatusItem>
          <StatusItem>
            <svg width="15" height="15" viewBox="0 0 15 15" fill="none"><path d="M2.500 5.500h11v9h-11zM7 2.500h6.500v3" stroke="#555" /><path d="M7 2h7v3H7z" fill="#555" /><circle cx="3.500" cy="3.500" r="3" fill="#555" /><path d="M4.500 8h2m1 0h2m1 0h2M4.500 10h2m1 0h2m1 0h2M4.500 12h2m1 0h2m1 0h2" stroke="#666" /></svg>
          </StatusItem>
          <StatusItem>
            <svg width="18" height="16" viewBox="0 0 18 16" fill="none" stroke="#444" strokeWidth="1.300"><path d="M6 1.500C0 4 0 12 6 14" strokeDasharray="3 1" /><circle cx="10.500" cy="2" r="1" fill="#444" /><path d="M5 5.500h11M13.500 3l2.500 2.500L13.500 8M10 5.500v3M8.500 9l8 6M16.500 8.500l-8 6.500" /></svg>
            Accessibility: Investigate
          </StatusItem>
          <Views>
            <ViewButton $active aria-label="Normal view">
              <svg width="16" height="15" viewBox="0 0 16 15"><path d="M.5.5h15v14H.5zM.5 5h15M.5 9.500h15M5.500.5v14M10.500.5v14" fill="none" stroke="#666" /></svg>
            </ViewButton>
            <ViewButton aria-label="Page layout view">
              <svg width="16" height="15" viewBox="0 0 16 15" fill="none" stroke="#555"><path d="M.5.5h15v14H.5zM3.500 2.500h9v10h-9zM5.500 5h5M5.500 7.500h5M5.500 10h5" /></svg>
            </ViewButton>
            <ViewButton aria-label="Page break preview">
              <svg width="16" height="15" viewBox="0 0 16 15" fill="none" stroke="#555"><path d="M.5.5h15v14H.5zM5.500.5v9M10.500.5v9M.5 9.500h10" /></svg>
            </ViewButton>
          </Views>
          <ZoomButton aria-label="Zoom out"><svg width="10" height="10" viewBox="0 0 10 10"><path d="M0 5h10" stroke="#444" strokeWidth="1.300" /></svg></ZoomButton>
          <ZoomSlider type="range" min={10} max={190} defaultValue={100} aria-label="Zoom" />
          <ZoomButton aria-label="Zoom in"><svg width="10" height="10" viewBox="0 0 10 10"><path d="M0 5h10M5 0v10" stroke="#444" strokeWidth="1.300" /></svg></ZoomButton>
          <ZoomValue>100%</ZoomValue>
        </StatusBar>
      </Window>
    </Desktop>
  </>
);

export default App;
